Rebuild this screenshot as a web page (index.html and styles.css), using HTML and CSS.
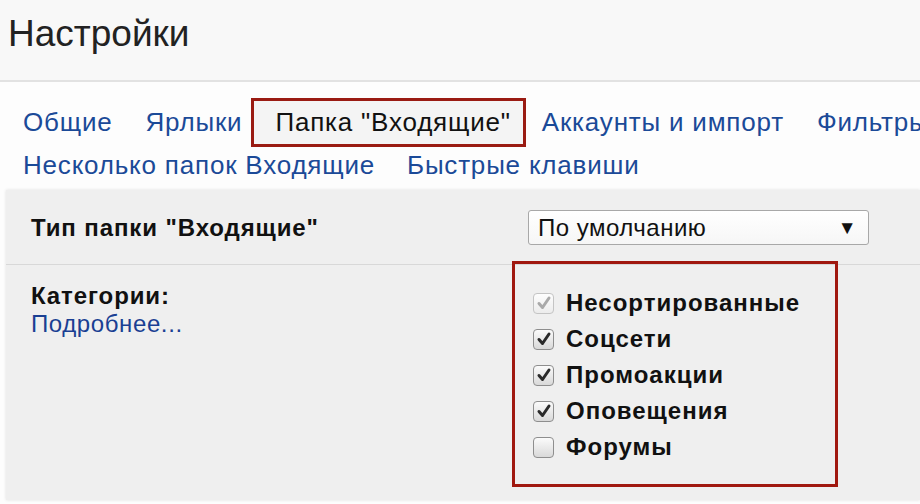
FILE: index.html
```html
<!DOCTYPE html>
<html lang="ru">
<head>
<meta charset="utf-8">
<title>Настройки</title>
<link rel="stylesheet" href="styles.css">
</head>
<body>
<header class="header">
  <h1 class="title">Настройки</h1>
</header>
<nav class="tabs">
  <div class="tab-row">
    <a class="tab">Общие</a>
    <a class="tab">Ярлыки</a>
    <a class="tab tab-active">Папка "Входящие"</a>
    <a class="tab">Аккаунты и импорт</a>
    <a class="tab">Фильтры</a>
  </div>
  <div class="tab-row tab-row-2">
    <a class="tab">Несколько папок Входящие</a>
    <a class="tab">Быстрые клавиши</a>
  </div>
</nav>
<main class="panel">
  <section class="row row-type">
    <div class="label"><b>Тип папки "Входящие"</b></div>
    <div class="control">
      <div class="select"><span>По умолчанию</span><span class="arrow">▼</span></div>
    </div>
  </section>
  <section class="row row-cats">
    <div class="label">
      <b>Категории:</b>
      <a class="more">Подробнее...</a>
    </div>
    <div class="control">
      <ul class="cats">
        <li><span class="cb cb-disabled"><svg viewBox="0 0 16 16"><path d="M3 8.5 L6.5 12.5 L13 3"/></svg></span>Несортированные</li>
        <li><span class="cb"><svg viewBox="0 0 16 16"><path d="M3 8.5 L6.5 12.5 L13 3"/></svg></span>Соцсети</li>
        <li><span class="cb"><svg viewBox="0 0 16 16"><path d="M3 8.5 L6.5 12.5 L13 3"/></svg></span>Промоакции</li>
        <li><span class="cb"><svg viewBox="0 0 16 16"><path d="M3 8.5 L6.5 12.5 L13 3"/></svg></span>Оповещения</li>
        <li><span class="cb cb-empty"></span>Форумы</li>
      </ul>
    </div>
  </section>
</main>
</body>
</html>
```
FILE: styles.css
```css
html, body {
  margin: 0;
  padding: 0;
}
body {
  width: 920px;
  height: 504px;
  overflow: hidden;
  background: #fdfdfd;
  font-family: "Liberation Sans", Arial, sans-serif;
  color: #111;
}
.header {
  height: 82px;
  background: #f8f8f8;
  border-bottom: 2px solid #e2e2e2;
  box-sizing: border-box;
}
.title {
  margin: 0;
  padding: 12px 0 0 8px;
  font-size: 37px;
  font-weight: normal;
  line-height: 44px;
  color: #222;
}
.tabs {
  padding: 16px 0 0 23px;
  white-space: nowrap;
}
.tab-row {
  display: flex;
  align-items: center;
  gap: 33px;
  height: 49px;
}
.tab-row-2 {
  height: 34px;
  gap: 32px;
  margin-top: 1px;
}
.tab {
  font-size: 26px;
  letter-spacing: 0.8px;
  color: #1b4a98;
}
.tab-active {
  color: #111;
  border: 3px solid #9a1b12;
  background: #f4f4f4;
  padding: 6px 12px 6px 21px;
  margin: 0 -17px 0 -24px;
}
.panel {
  margin: 8px 0 0 6px;
  height: 310px;
  background: #efefef;
  box-shadow: 0 0 3px rgba(0, 0, 0, 0.12);
}
.row {
  display: flex;
  padding-left: 25px;
}
.row-type {
  height: 75px;
  border-bottom: 1px solid #d8d8d8;
  box-sizing: border-box;
  align-items: center;
}
.label {
  width: 497px;
  flex: none;
  font-size: 24px;
  letter-spacing: 0.9px;
}
.row-type .label {
  padding-top: 2px;
}
.select {
  width: 341px;
  height: 35px;
  box-sizing: border-box;
  border: 1px solid #a8a8a8;
  border-radius: 3px;
  background: linear-gradient(#ffffff, #f6f6f6);
  display: flex;
  align-items: center;
  justify-content: space-between;
  padding: 2px 11px 0 9px;
  font-size: 24px;
  letter-spacing: 0.5px;
  color: #111;
}
.arrow {
  font-size: 19px;
}
.row-cats {
  align-items: flex-start;
}
.row-cats .label {
  padding-top: 17px;
  display: flex;
  flex-direction: column;
  line-height: 28px;
}
.more {
  font-weight: normal;
  color: #1a3f93;
  font-size: 24px;
  letter-spacing: 0.6px;
}
.cats {
  list-style: none;
  margin: -4px 0 0 -16px;
  padding: 21px 20px 19px 18px;
  width: 326px;
  box-sizing: border-box;
  border: 3px solid #a0180f;
  font-size: 24px;
  font-weight: bold;
  letter-spacing: 1px;
}
.cats li {
  display: flex;
  align-items: center;
  height: 36px;
}
.cb {
  width: 21px;
  height: 21px;
  box-sizing: border-box;
  border: 1px solid #8e8e8e;
  border-radius: 4px;
  background: linear-gradient(#fbfbfb, #d9d9d9);
  margin-right: 12px;
  display: flex;
  align-items: center;
  justify-content: center;
}
.cb svg {
  width: 16px;
  height: 16px;
}
.cb path {
  fill: none;
  stroke: #2a2a2a;
  stroke-width: 3;
  stroke-linecap: round;
  stroke-linejoin: round;
}
.cb-disabled {
  border-color: #c4c4c4;
  background: linear-gradient(#fdfdfd, #ececec);
}
.cb-disabled path {
  stroke: #a9a9a9;
}
```
